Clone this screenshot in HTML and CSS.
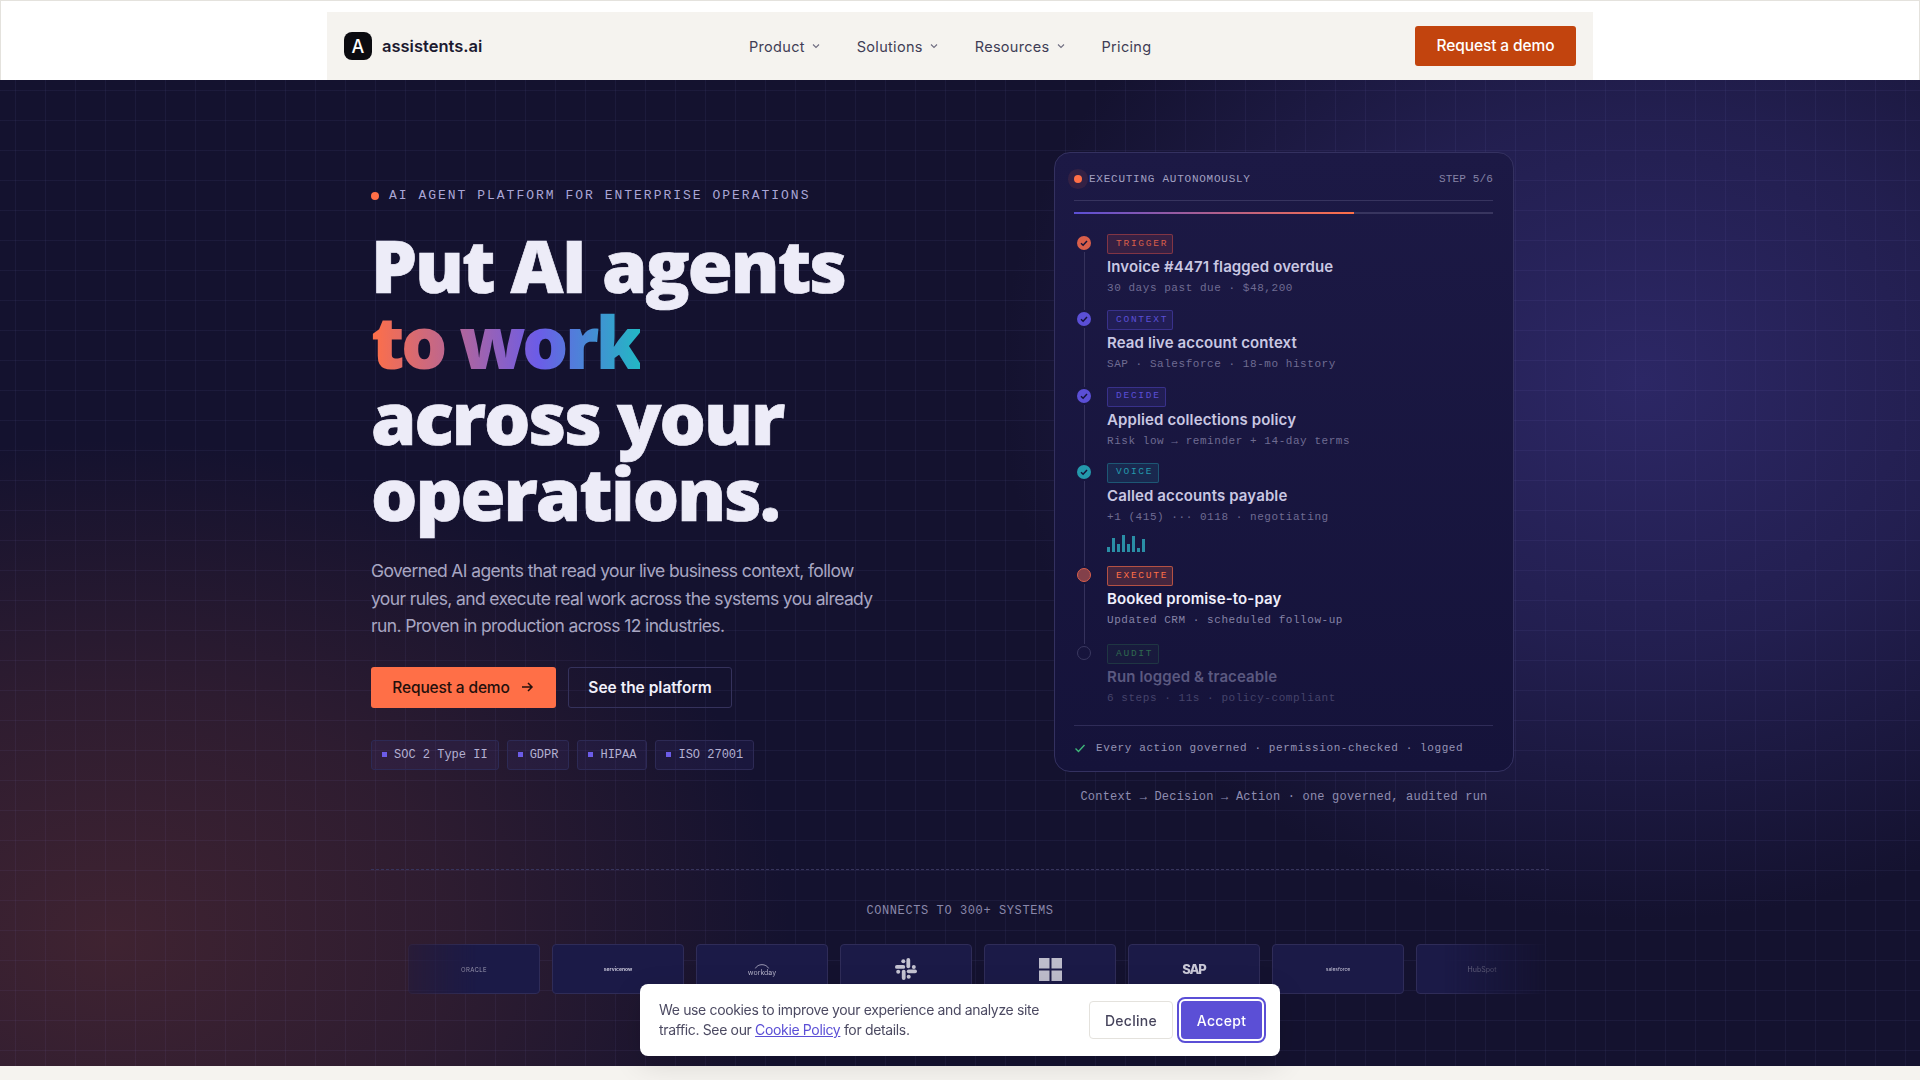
FILE: index.html
```html
<!DOCTYPE html>
<html lang="en">
<head>
  <meta charset="UTF-8" />
  <meta name="viewport" content="width=device-width, initial-scale=1.0"/>
  <title>assistents.ai</title>
  <link rel="stylesheet" href="styles.css">
</head>
<body>
  <header class="site-header">
    <nav class="nav">
      <a class="brand" href="#"><span class="brand-mark">A</span><span class="brand-name">assistents.ai</span></a>
      <div class="nav-links">
        <a href="#">Product <svg class="chev" viewBox="0 0 10 10"><path d="M2 3.5 5 6.5 8 3.5"/></svg></a>
        <a href="#">Solutions <svg class="chev" viewBox="0 0 10 10"><path d="M2 3.5 5 6.5 8 3.5"/></svg></a>
        <a href="#">Resources <svg class="chev" viewBox="0 0 10 10"><path d="M2 3.5 5 6.5 8 3.5"/></svg></a>
        <a href="#">Pricing</a>
      </div>
      <a class="nav-cta" href="#">Request a demo</a>
    </nav>
  </header>

  <main class="hero">
    <div class="hero-inner">
      <section class="hero-grid">
        <div class="hero-copy">
          <p class="eyebrow"><span class="eyebrow-dot"></span>AI AGENT PLATFORM FOR ENTERPRISE OPERATIONS</p>
          <h1>Put AI agents<br><span class="grad">to work</span><br>across your<br>operations.</h1>
          <p class="lead">Governed AI agents that read your live business context, follow your rules, and execute real work across the systems you already run. Proven in production across 12 industries.</p>
          <div class="cta-row">
            <a class="btn btn-primary" href="#">Request a demo
              <svg viewBox="0 0 16 16"><path d="M3 8h10M9 4l4 4-4 4"/></svg>
            </a>
            <a class="btn btn-ghost" href="#">See the platform</a>
          </div>
          <ul class="badges">
            <li>SOC 2 Type II</li>
            <li>GDPR</li>
            <li>HIPAA</li>
            <li>ISO 27001</li>
          </ul>
        </div>

        <div class="run-col">
          <div class="run-card">
            <div class="run-head">
              <span class="pulse"></span>
              <span class="run-status">EXECUTING AUTONOMOUSLY</span>
              <span class="run-step">STEP 5/6</span>
            </div>
            <div class="progress"><span class="progress-fill"></span></div>

            <div class="step step-trigger">
              <div class="rail">
                <span class="dot"><svg viewBox="0 0 14 14"><path d="M4 7.2 6.1 9.2 10 5"/></svg></span>
                <span class="rail-line"></span>
              </div>
              <div class="step-body">
                <span class="tag">TRIGGER</span>
                <div class="step-title">Invoice #4471 flagged overdue</div>
                <div class="step-sub">30 days past due · $48,200</div>
              </div>
            </div>

            <div class="step step-indigo">
              <div class="rail">
                <span class="dot"><svg viewBox="0 0 14 14"><path d="M4 7.2 6.1 9.2 10 5"/></svg></span>
                <span class="rail-line"></span>
              </div>
              <div class="step-body">
                <span class="tag">CONTEXT</span>
                <div class="step-title">Read live account context</div>
                <div class="step-sub">SAP · Salesforce · 18-mo history</div>
              </div>
            </div>

            <div class="step step-indigo">
              <div class="rail">
                <span class="dot"><svg viewBox="0 0 14 14"><path d="M4 7.2 6.1 9.2 10 5"/></svg></span>
                <span class="rail-line"></span>
              </div>
              <div class="step-body">
                <span class="tag tag-short">DECIDE</span>
                <div class="step-title">Applied collections policy</div>
                <div class="step-sub">Risk low → reminder + 14-day terms</div>
              </div>
            </div>

            <div class="step step-voice">
              <div class="rail">
                <span class="dot"><svg viewBox="0 0 14 14"><path d="M4 7.2 6.1 9.2 10 5"/></svg></span>
                <span class="rail-line"></span>
              </div>
              <div class="step-body">
                <span class="tag">VOICE</span>
                <div class="step-title">Called accounts payable</div>
                <div class="step-sub">+1 (415) ··· 0118 · negotiating</div>
                <div class="wave">
                  <i class="b5"></i><i class="b14"></i><i class="b8"></i><i class="b17"></i><i class="b8"></i><i class="b16"></i><i class="b4"></i><i class="b13"></i>
                </div>
              </div>
            </div>

            <div class="step step-execute">
              <div class="rail">
                <span class="dot"></span>
                <span class="rail-line"></span>
              </div>
              <div class="step-body">
                <span class="tag">EXECUTE</span>
                <div class="step-title">Booked promise-to-pay</div>
                <div class="step-sub">Updated CRM · scheduled follow-up</div>
              </div>
            </div>

            <div class="step step-audit">
              <div class="rail">
                <span class="dot"></span>
              </div>
              <div class="step-body">
                <span class="tag">AUDIT</span>
                <div class="step-title">Run logged &amp; traceable</div>
                <div class="step-sub">6 steps · 11s · policy-compliant</div>
              </div>
            </div>

            <div class="run-foot">
              <svg viewBox="0 0 12 12"><path d="M1.5 6.5 4.5 9.5 10.5 3"/></svg>
              Every action governed · permission-checked · logged
            </div>
          </div>
          <p class="run-caption">Context → Decision → Action · one governed, audited run</p>
        </div>
      </section>

      <section class="connects">
        <p class="connects-label">CONNECTS TO 300+ SYSTEMS</p>
        <div class="logo-row">
          <div class="logo-card"><span class="lg-oracle">ORACLE</span></div>
          <div class="logo-card"><span class="lg-now">servicenow</span></div>
          <div class="logo-card lg-workday">
            <svg viewBox="0 0 24 8"><path d="M4 7.5C7 1.5 17 1.5 20 7.5"/></svg>
            <span>workday</span>
          </div>
          <div class="logo-card">
            <svg class="lg-slack" viewBox="0 0 24 24">
              <rect x="1" y="8" width="10.2" height="3.8" rx="1.9"/>
              <circle cx="9.3" cy="4.2" r="2"/>
              <rect x="12.4" y="1" width="3.8" height="10.2" rx="1.9"/>
              <circle cx="19.8" cy="9.9" r="2"/>
              <rect x="12.8" y="12.4" width="10.2" height="3.8" rx="1.9"/>
              <circle cx="14.7" cy="19.8" r="2"/>
              <rect x="7.8" y="12.8" width="3.8" height="10.2" rx="1.9"/>
              <circle cx="4.2" cy="14.7" r="2"/>
            </svg>
          </div>
          <div class="logo-card">
            <svg class="lg-ms" viewBox="0 0 23 23">
              <rect x="0" y="0" width="10.5" height="10.5"/>
              <rect x="12.5" y="0" width="10.5" height="10.5"/>
              <rect x="0" y="12.5" width="10.5" height="10.5"/>
              <rect x="12.5" y="12.5" width="10.5" height="10.5"/>
            </svg>
          </div>
          <div class="logo-card"><span class="lg-sap">SAP</span></div>
          <div class="logo-card"><span class="lg-sf">salesforce</span></div>
          <div class="logo-card"><span class="lg-hub">HubSpot</span></div>
        </div>
      </section>
    </div>
  </main>

  <div class="cookie">
    <p>We use cookies to improve your experience and analyze site traffic. See our <a href="#">Cookie Policy</a> for details.</p>
    <div class="cookie-actions">
      <button class="cookie-decline">Decline</button>
      <button class="cookie-accept">Accept</button>
    </div>
  </div>
</body>
</html>
```

FILE: styles.css
```css
* { box-sizing: border-box; }
html, body { height: 100%; }
body { margin: 0; background: #f5f3ef; font-family: Inter, "Noto Sans", sans-serif; color: #1a1830; overflow: hidden; }
a { color: inherit; text-decoration: none; }

/* header */
.site-header { height: 80px; background: #fff; border: 1px solid #e4e2dd; border-bottom: none; padding-top: 11px; }
.nav { width: 1266px; height: 68px; margin-left: 326px; background: #f5f3ef; display: flex; align-items: center; padding: 0 17px; }
.brand { display: flex; align-items: center; gap: 10px; width: 405px; }
.brand-mark { width: 28px; height: 28px; border-radius: 8px; background: #0b0b10; color: #fff; display: flex; align-items: center; justify-content: center; font-size: 18px; font-weight: 500; }
.brand-name { font-size: 16.5px; font-weight: 600; color: #1c1a30; }
.nav-links { display: flex; align-items: center; gap: 36px; font-size: 14.5px; font-weight: 400; letter-spacing: .3px; color: #3f3d55; }
.nav-links a { display: flex; align-items: center; gap: 6px; }
.chev { width: 10px; height: 10px; fill: none; stroke: #6f6d80; stroke-width: 1.1; }
.nav-cta { margin-left: auto; width: 161px; height: 40px; background: #c2440e; color: #fff; border-radius: 3px; display: flex; align-items: center; justify-content: center; font-size: 15.5px; font-weight: 500; letter-spacing: -0.1px; padding-bottom: 2px; }

/* hero */
.hero {
  height: 986px;
  background-color: #14122f;
  background-image:
    linear-gradient(rgba(130,125,210,.08) 1px, transparent 1px),
    linear-gradient(90deg, rgba(130,125,210,.08) 1px, transparent 1px),
    radial-gradient(ellipse 640px 540px at 1640px 300px, #2c2765 0%, rgba(44,39,101,.6) 50%, rgba(44,39,101,0) 100%),
    radial-gradient(ellipse 680px 500px at 110px 860px, #3f2331 0%, rgba(63,35,49,.6) 50%, rgba(63,35,49,0) 100%);
  background-size: 30px 30px, 30px 30px, auto, auto;
  background-position: 15px 10px, 15px 10px, 0 0, 0 0;
}
.hero-inner { width: 1178px; margin: 0 auto; padding-top: 72px; }
.hero-grid { display: grid; grid-template-columns: 1fr 530px; align-items: center; }
.hero-copy { padding-top: 2px; }

.eyebrow { margin: 0; display: flex; align-items: center; gap: 10px; font-family: "Liberation Mono", monospace; font-size: 13px; letter-spacing: 2px; color: #aaa6d6; }
.eyebrow-dot { width: 8px; height: 8px; border-radius: 50%; background: #ff6f47; }
h1 { margin: 24px 0 0; font-family: "Open Sans", sans-serif; font-size: 73px; line-height: 76px; font-weight: 800; letter-spacing: -2px; color: #edecf8; -webkit-text-stroke: .7px #edecf8; }
.grad { background: linear-gradient(90deg, #ff6f47 0%, #6c5ce7 62%, #22b8c4 100%); -webkit-background-clip: text; background-clip: text; color: transparent; -webkit-text-stroke: 0; letter-spacing: -3.6px; display: inline-block; }
.lead { margin: 26px 0 0; width: 505px; font-size: 17.5px; line-height: 27.5px; font-weight: 400; letter-spacing: -0.62px; color: #a8a6c2; }
.cta-row { display: flex; gap: 12px; margin-top: 27px; }
.btn { height: 41px; display: flex; align-items: center; justify-content: center; border-radius: 3px; font-size: 15.5px; font-weight: 500; }
.btn-primary { width: 185px; gap: 9px; background: #ff6f47; color: #24100c; letter-spacing: -0.15px; }
.btn-primary svg { width: 16px; height: 16px; fill: none; stroke: #24100c; stroke-width: 1.5; }
.btn-ghost { width: 164px; border: 1px solid #35325c; color: #f1f0fa; font-weight: 600; }
.badges { list-style: none; display: flex; gap: 8px; margin: 32px 0 0; padding: 0; }
.badges li { height: 30px; display: flex; align-items: center; gap: 7px; padding: 0 10px; background: rgba(108,92,231,.08); border: 1px solid #2d2a55; border-radius: 3px; font-family: "Liberation Mono", monospace; font-size: 12px; color: #b4b1d2; }
.badges li::before { content: ""; width: 5px; height: 5px; background: #6c5ce7; }

/* run card */
.run-col { justify-self: center; width: 460px; }
.run-card { height: 620px; padding: 15px 20px 0 19px; border: 1px solid #343160; border-radius: 16px; background: linear-gradient(180deg, #1c1945, #15133a); }
.run-head { display: flex; align-items: center; height: 21px; margin-bottom: 11px; }
.pulse { width: 8px; height: 8px; border-radius: 50%; background: #ff6f47; box-shadow: 0 0 0 6px rgba(255,111,71,.1); margin-right: 7px; }
.run-status { font-family: "Liberation Mono", monospace; font-size: 11px; letter-spacing: .75px; color: #a3a1c2; }
.run-step { margin-left: auto; font-family: "Liberation Mono", monospace; font-size: 11px; letter-spacing: .15px; color: #8583a6; }
.progress { height: 14px; margin-bottom: 20px; border-top: 1px solid #37345f; padding-top: 11px; }
.progress-fill { display: block; height: 2px; width: 100%; background: linear-gradient(90deg, #5b4fd6 0%, #ff6f47 66.8%, #38355f 66.8%); }

.step { display: flex; gap: 16px; margin-left: 3px; }
.rail { width: 14px; display: flex; flex-direction: column; align-items: center; padding-top: 2px; }
.rail-line { flex: 1; width: 1px; background: #35325c; margin: 2px 0 0; }
.dot { width: 14px; height: 14px; border-radius: 50%; display: block; flex: none; }
.dot svg { display: block; width: 14px; height: 14px; fill: none; stroke: #15133a; stroke-width: 1.5; }
.step-body { padding-bottom: 14.3px; }
.tag { display: inline-flex; align-items: center; height: 20px; width: 66px; padding-left: 8px; font-family: "Liberation Mono", monospace; font-size: 9.5px; letter-spacing: 1.75px; border: 1px solid; border-radius: 2px; padding-bottom: 2px; vertical-align: top; }
.tag-short { width: 59px; }
.step-title { margin-top: 2px; height: 22px; line-height: 22px; font-size: 15px; font-weight: 600; letter-spacing: .12px; color: #c9c7e2; }
.step-sub { margin-top: 2px; height: 16px; line-height: 16px; font-family: "Liberation Mono", monospace; font-size: 11px; letter-spacing: .55px; color: #6f6c92; }

.step-trigger .dot { background: #d95f4a; }
.step-trigger .tag { color: #d95f4a; background: rgba(255,90,70,.12); border-color: rgba(255,90,70,.38); }
.step-indigo .dot { background: #5b4fd6; }
.step-indigo .tag { color: #5b4fd6; background: rgba(91,79,214,.13); border-color: rgba(91,79,214,.42); }
.step-voice .dot { background: #2499ac; }
.step-voice .tag { width: 52px; color: #2499ac; background: rgba(36,153,172,.14); border-color: rgba(36,153,172,.42); }
.step-execute .dot { background: #83404a; border: 1px solid #d95f4a; }
.step-execute .tag { color: #ff6f47; background: rgba(255,111,71,.2); border-color: rgba(255,111,71,.6); }
.step-execute .step-title { color: #efeefb; }
.step-execute .step-sub { color: #8583a6; }
.step-execute .step-body { padding-bottom: 16px; }
.step-audit .dot { border: 1px solid #3a3860; }
.step-audit .tag { width: 52px; color: #2f6a4f; background: rgba(47,106,79,.08); border-color: rgba(47,106,79,.35); }
.step-audit .step-title { color: #5b5980; }
.step-audit .step-sub { color: #45436a; }
.step-audit .step-body { padding-bottom: 19px; }

.wave { display: flex; align-items: flex-end; gap: 2px; height: 17px; margin-top: 10px; }
.wave i { width: 3px; background: #2a8ea6; }
.b4 { height: 4px; } .b5 { height: 5px; } .b8 { height: 8px; } .b13 { height: 13px; } .b14 { height: 14px; } .b16 { height: 16px; } .b17 { height: 17px; }

.run-foot { display: flex; align-items: center; gap: 10px; padding-top: 16px; border-top: 1px solid #2f2c58; font-family: "Liberation Mono", monospace; font-size: 11px; letter-spacing: .6px; color: #9694b5; }
.run-foot svg { width: 12px; height: 12px; fill: none; stroke: #3fb77a; stroke-width: 1.4; }
.run-caption { margin: 18px 0 0; text-align: center; font-family: "Liberation Mono", monospace; font-size: 12px; letter-spacing: .2px; color: #8f8db0; }

/* connects */
.connects { margin-top: 65px; border-top: 1px dashed #37345c; padding-top: 33px; }
.connects-label { margin: 0; text-align: center; font-family: "Liberation Mono", monospace; font-size: 12px; letter-spacing: .6px; line-height: 16px; color: #8a88aa; }
.logo-row { display: flex; gap: 12px; margin-top: 25px; padding-left: 37px; overflow: hidden; -webkit-mask-image: linear-gradient(90deg, transparent, #000 9%, #000 91%, transparent); mask-image: linear-gradient(90deg, transparent, #000 9%, #000 91%, transparent); }
.logo-card { flex: none; width: 132px; height: 50px; display: flex; flex-direction: column; align-items: center; justify-content: center; border: 1px solid #2f2c58; border-radius: 4px; background: #1b1a47; color: #c2c0d4; }
.lg-oracle { font-size: 6px; letter-spacing: .4px; color: #9a98b0; }
.lg-now { font-size: 5px; font-weight: 700; }
.lg-workday svg { width: 20px; height: 7px; fill: none; stroke: #b2b0c6; stroke-width: 1; }
.lg-workday span { font-size: 7px; line-height: 8px; color: #b2b0c6; }
.lg-slack { width: 24px; height: 24px; fill: #c4c3d1; }
.lg-ms { width: 23px; height: 23px; fill: #bdbccb; }
.lg-sap { font-size: 13px; font-weight: 800; letter-spacing: -1.1px; color: #c9c8d6; }
.lg-sf { font-size: 5px; }
.lg-hub { font-size: 7px; color: #7d7b96; }

/* cookie */
.cookie { position: fixed; left: 640px; top: 984px; width: 640px; height: 72px; background: #fff; border-radius: 8px; padding: 0 18px 0 19px; display: flex; align-items: center; justify-content: space-between; box-shadow: 0 8px 30px rgba(0,0,0,.12); }
.cookie p { margin: 0; width: 400px; font-size: 14px; line-height: 20px; letter-spacing: -0.35px; color: #4c4a62; }
.cookie p a { color: #5b4fd6; text-decoration: underline; }
.cookie-actions { display: flex; gap: 8px; }
.cookie button { height: 38px; border-radius: 4px; font-family: inherit; font-size: 14px; font-weight: 500; letter-spacing: .3px; cursor: pointer; }
.cookie-decline { width: 84px; background: #fff; border: 1px solid #e4e2dd; color: #46445c; }
.cookie-accept { width: 81px; background: #5b4fd6; border: none; color: #fff; outline: 2px solid #5b4fd6; outline-offset: 2px; }
```
